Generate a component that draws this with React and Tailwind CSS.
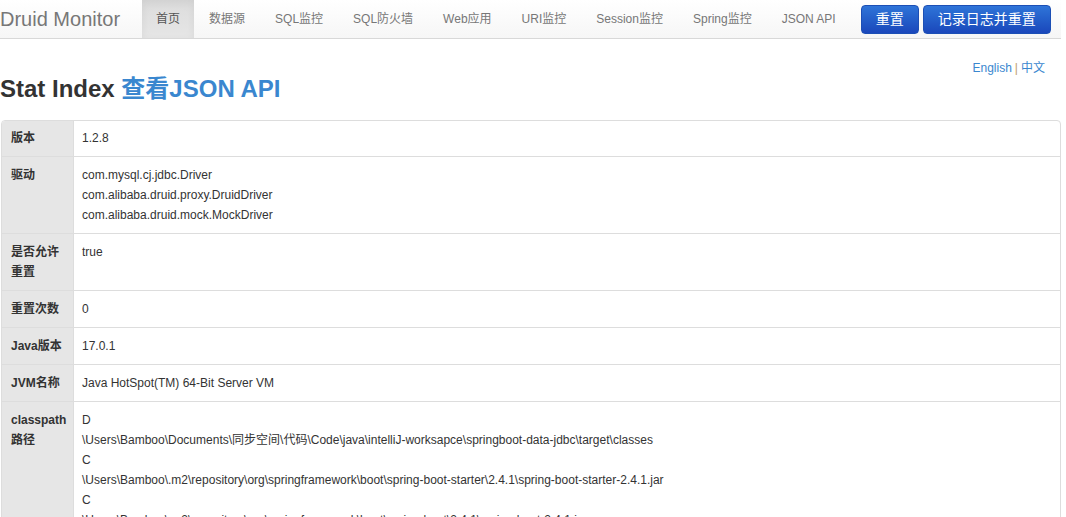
import React from "react";

const navItems = ["首页", "数据源", "SQL监控", "SQL防火墙", "Web应用", "URI监控", "Session监控", "Spring监控", "JSON API"];

const rows = [
  { label: "版本", lines: ["1.2.8"] },
  {
    label: "驱动",
    lines: ["com.mysql.cj.jdbc.Driver", "com.alibaba.druid.proxy.DruidDriver", "com.alibaba.druid.mock.MockDriver"],
  },
  { label: "是否允许重置", lines: ["true"] },
  { label: "重置次数", lines: ["0"] },
  { label: "Java版本", lines: ["17.0.1"] },
  { label: "JVM名称", lines: ["Java HotSpot(TM) 64-Bit Server VM"] },
  {
    label: "classpath路径",
    lines: [
      "D",
      "\\Users\\Bamboo\\Documents\\同步空间\\代码\\Code\\java\\intelliJ-worksapce\\springboot-data-jdbc\\target\\classes",
      "C",
      "\\Users\\Bamboo\\.m2\\repository\\org\\springframework\\boot\\spring-boot-starter\\2.4.1\\spring-boot-starter-2.4.1.jar",
      "C",
      "\\Users\\Bamboo\\.m2\\repository\\org\\springframework\\boot\\spring-boot\\2.4.1\\spring-boot-2.4.1.jar",
      "C",
      "\\Users\\Bamboo\\.m2\\repository\\org\\springframework\\spring-context\\5.3.2\\spring-context-5.3.2.jar",
    ],
  },
];

const App = () => {
  return (
    <div className="w-[1061px] bg-white text-[#333] font-['Liberation_Sans','Noto_Sans_CJK_SC',sans-serif]">
      {/* navbar */}
      <div className="h-[39px] flex items-stretch border-b border-[#d8d8d8] bg-gradient-to-b from-white to-[#f6f6f6]">
        <div className="flex items-center pr-[22px] text-[20px] text-[#777] leading-[38px]">Druid Monitor</div>
        <div className="flex items-stretch">
          {navItems.map((item, i) => (
            <div
              key={item}
              className={
                i === 0
                  ? "px-[14px] flex items-center text-[12px] text-[#555] bg-gradient-to-b from-[#dcdcdc] to-[#e6e6e6] shadow-[inset_0_3px_9px_rgba(0,0,0,0.06)]"
                  : "px-[15px] flex items-center text-[12px] text-[#777]"
              }
            >
              {item}
            </div>
          ))}
        </div>
        <div className="flex items-center gap-[4px] ml-[10px] pt-[1px]">
          <button className="h-[29px] px-[14px] rounded-[4px] border border-[#1c4fb5] bg-gradient-to-b from-[#2f74d8] to-[#1b47bb] text-white text-[14px]">
            重置
          </button>
          <button className="h-[29px] px-[14px] rounded-[4px] border border-[#1c4fb5] bg-gradient-to-b from-[#2f74d8] to-[#1b47bb] text-white text-[14px]">
            记录日志并重置
          </button>
        </div>
      </div>

      {/* lang links */}
      <div className="pt-[21px] h-[37px] flex justify-end pr-[16px] text-[12px] leading-[16px]">
        <span className="text-[#3a87cf]">English</span>
        <span className="text-[#c0a070] px-[3px]">|</span>
        <span className="text-[#3a87cf]">中文</span>
      </div>

      {/* heading */}
      <h1 className="text-[24px] leading-[26px] font-bold text-[#333]">
        Stat Index <span className="text-[#3a87cf]">查看JSON API</span>
      </h1>

      {/* info table */}
      <div className="mt-[18px] ml-[1px] border border-[#ddd] rounded-[4px] overflow-hidden text-[12px] leading-[20px]">
        {rows.map((row, i) => (
          <div key={row.label} className={i === 0 ? "flex" : "flex border-t border-[#ddd]"}>
            <div
              className={
                i === 0
                  ? "w-[72px] shrink-0 bg-[#e6e6e6] border-r border-[#ddd] pl-[9px] pr-[3px] pt-[7px] pb-[8px] font-bold"
                  : "w-[72px] shrink-0 bg-[#e6e6e6] border-r border-[#ddd] pl-[9px] pr-[3px] py-[8px] font-bold"
              }
            >
              {row.label}
            </div>
            <div className={i === 0 ? "flex-1 px-[8px] pt-[7px] pb-[8px] flex flex-col" : "flex-1 px-[8px] py-[8px] flex flex-col"}>
              {row.lines.map((l, j) => (
                <div key={j}>{l}</div>
              ))}
            </div>
          </div>
        ))}
      </div>
    </div>
  );
};

export default App;
